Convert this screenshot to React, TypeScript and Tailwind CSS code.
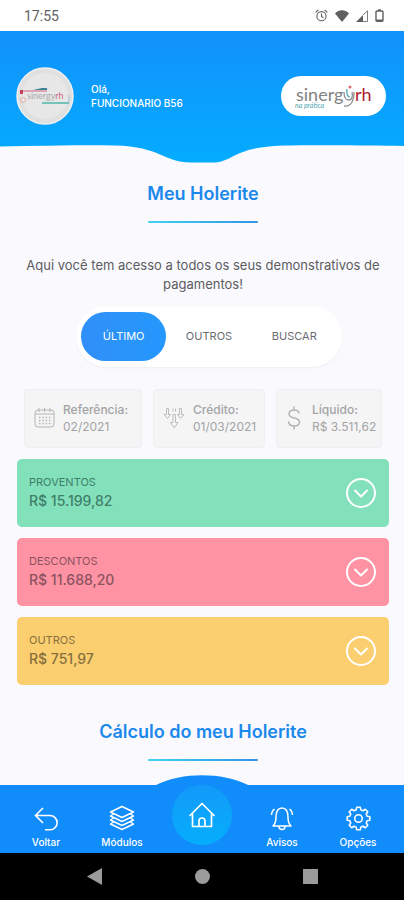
import { useState } from "react";

const tabs = ["ÚLTIMO", "OUTROS", "BUSCAR"];

const totals = [
  { label: "PROVENTOS", value: "R$ 15.199,82", color: "bg-[#82e0bb] text-[#3f7f69]" },
  { label: "DESCONTOS", value: "R$ 11.688,20", color: "bg-[#ff92a3] text-[#8a5260]" },
  { label: "OUTROS", value: "R$ 751,97", color: "bg-[#fbce70] text-[#86703e]" },
];

// outline of an 8 tooth gear around 12,12
const gearPoints = Array.from({ length: 8 })
  .flatMap((_, i) =>
    [
      [-15, 8.6],
      [-9, 11],
      [9, 11],
      [15, 8.6],
    ].map(([offset, radius]) => {
      const angle = ((i * 45 + offset) * Math.PI) / 180;
      return `${12 + radius * Math.cos(angle)},${12 + radius * Math.sin(angle)}`;
    })
  )
  .join(" ");

function CalendarIcon() {
  return (
    <svg width="21" height="22" viewBox="0 0 21 22" fill="none" stroke="#b4b4b4">
      <rect x="1" y="3" width="19" height="17" rx="3" />
      <path d="M1 7h19M5 1v4M10.500 1v4M16 1v4" />
      <path d="M5 10.500h12M5 13.500h12M5 16.500h12" strokeWidth="1.500" strokeDasharray="1.500 1.800" />
    </svg>
  );
}

function ArrowsIcon() {
  return (
    <svg width="22" height="22" viewBox="0 0 22 22" fill="none" stroke="#bcbcbc" strokeLinejoin="round">
      <path d="M3.500 1.500h2v6h2l-3 4-3.500-4h2.500zM16.500 1.500h2v6H21l-3.500 4-3-4h2z" />
      <path d="M10 7.500h2.500v8h2.500L11.300 21 7.500 15.500H10zM10 1.500v3M12.500 1.500v3" />
    </svg>
  );
}

function DollarIcon() {
  return (
    <svg width="18" height="24" viewBox="-1 0 18 24" fill="none" stroke="#b4b4b4" strokeWidth="1.500" strokeLinecap="round">
      <path d="M12 7c-.5-2-2.500-3-5-3-2.800 0-5 1.500-5 4 0 5.500 10.500 2.500 10.500 8 0 2.500-2.300 4-5.300 4C4 20 2 18.500 1.500 16M7 1v3M7 20v3" />
    </svg>
  );
}

const infos = [
  { label: "Referência:", value: "02/2021", icon: <CalendarIcon /> },
  { label: "Crédito:", value: "01/03/2021", icon: <ArrowsIcon /> },
  { label: "Líquido:", value: "R$ 3.511,62", icon: <DollarIcon /> },
];

function StatusBar() {
  return (
    <div className="flex h-[31px] items-center justify-between bg-white pr-5 pl-6 text-[#5f6062]">
      <span className="font-['Roboto',sans-serif] text-sm">17:55</span>
      <div className="flex items-center gap-[7px]">
        <svg width="13" height="13" viewBox="0 0 13 13" fill="none" stroke="currentColor" strokeWidth="1.100">
          <circle cx="6.500" cy="7.200" r="4.600" />
          <path d="M6.500 4.500v3l2 1.200M.6 3.300 3.300 1M12.400 3.300 9.700 1" />
        </svg>
        <svg width="14" height="12" viewBox="0 0 14 12" fill="currentColor">
          <path d="M0 3.500C4-.7 10-.7 14 3.500L7 12z" />
        </svg>
        <svg width="12" height="12" viewBox="0 0 12 12">
          <path d="M0 12 7 5v7z" fill="currentColor" />
          <path d="M7 5l4.500-4.200v10.700H7" fill="none" stroke="currentColor" strokeWidth=".8" />
        </svg>
        <svg width="9" height="13" viewBox="0 0 9 13" fill="none" stroke="currentColor" strokeWidth="1.400">
          <rect x="1" y="2" width="7" height="10.300" rx="1" />
          <path d="M3 1h3M1 11.300h7" />
        </svg>
      </div>
    </div>
  );
}

function Avatar() {
  return (
    <svg width="58" height="58" viewBox="0 0 58 58" aria-label="sinergyrh">
      <circle cx="29" cy="29" r="28" fill="#e0e0e0" stroke="#efefef" strokeWidth="1.500" />
      <circle cx="29" cy="29" r="23" fill="#e7e7e7" />
      <path d="M5 24h26" stroke="#d5637c" strokeWidth="1" />
      <path d="M17 23l9-2h5v2z" fill="#3b8294" />
      <path d="M4 23h3v4H4z" fill="#c43d5c" />
      <path d="M26 36h27" stroke="#4fb7a8" strokeWidth="1.500" />
      <path d="M53 28v8" stroke="#a5c7cf" />
      <circle cx="7" cy="33" r="2.500" fill="none" stroke="#dfb4a6" />
      <text x="11" y="32" fontSize="9" fill="#a9a9a9" fontFamily="Lato, sans-serif">
        sinergy<tspan fill="#d0697c">rh</tspan>
      </text>
    </svg>
  );
}

function Logo() {
  return (
    <div className="flex h-10 w-[105px] items-center justify-center rounded-full bg-white">
      <svg width="80" height="36" viewBox="0 0 80 36" aria-label="sinergyrh na prática">
        <text x="2" y="23" fontSize="18" fill="#838383" fontFamily="Lato, sans-serif">sinerg</text>
        <path d="M50 14c0 5 2 8 5 8s4-4 3-8M60 14c0 9-3 15-10 14" fill="none" stroke="#929292" strokeWidth="1.300" />
        <path d="M53 11c-1 5 1 8 3 8" fill="none" stroke="#65b5bd" strokeWidth="1.500" />
        <circle cx="56" cy="9" r="1.500" fill="#d96d72" />
        <text x="61" y="23" fontSize="18" fill="#b01c32" fontFamily="Lato, sans-serif">rh</text>
        <text x="1" y="30" fontSize="7" fontStyle="italic" fill="#4fa7b1" fontFamily="Lato, sans-serif">na prática</text>
      </svg>
    </div>
  );
}

function Header() {
  return (
    <header className="bg-linear-to-b from-[#1291fb] to-[#04acff]">
      <div className="flex h-[114px] items-center justify-between pt-4 pr-[18px] pl-4">
        <div className="flex items-center gap-[17px]">
          <Avatar />
          <p className="text-[10px] leading-[14px] font-medium text-white">
            Olá,
            <br />
            FUNCIONARIO B56
          </p>
        </div>
        <Logo />
      </div>
      <svg className="block h-[19px] w-full" viewBox="0 0 404 19" preserveAspectRatio="none">
        <path d="M0 1.500C40 1 80 0 115 .5 160 1.500 165 17.500 190 17.500H216C234 16 236 .5 290 .5 340 0 370 .5 404 1V19H0z" fill="#faf9fe" />
      </svg>
    </header>
  );
}

function Title({ children }: { children: string }) {
  return (
    <div className="flex flex-col items-center gap-[13px]">
      <h2 className="text-lg font-semibold text-[#1a88ec]">{children}</h2>
      <div className="h-[2px] w-[110px] rounded-full bg-linear-to-r from-[#3fd3ee] to-[#3294e4]" />
    </div>
  );
}

function NavBar() {
  const item = "flex flex-1 flex-col items-center gap-1 text-[10px] leading-[14px] font-medium";
  return (
    <nav className="relative flex h-[68px] items-end bg-[#118cfb] px-2 pb-1 text-white">
      <svg className="absolute bottom-full left-1/2 -ml-[46px]" width="92" height="10" viewBox="0 0 92 10">
        <path d="M0 10C26-3 66-3 92 10z" fill="#118cfb" />
      </svg>
      <button className={item}>
        <svg width="24" height="24" viewBox="0 0 24 24" fill="none" stroke="currentColor" strokeWidth="1.600">
          <path d="M9 1 1.500 8.500 9 16M1.500 8.500H16a7 7 0 0 1 0 14.300h-5" />
        </svg>
        Voltar
      </button>
      <button className={item}>
        <svg width="26" height="26" viewBox="0 0 26 26" fill="none" stroke="currentColor" strokeWidth="1.500" strokeLinejoin="round">
          <path d="M13 1.500 24.500 7 13 12.500 1.500 7z" />
          <path d="m4.500 9-3 2L13 16.500 24.500 11l-3-2M4.500 13l-3 2L13 20.500 24.500 15l-3-2M4.500 17l-3 2L13 24.500 24.500 19l-3-2" />
        </svg>
        Módulos
      </button>
      <button aria-label="Início" className="mx-3 mb-1 flex size-[60px] items-center justify-center rounded-full bg-linear-to-b from-[#129af9] to-[#05aefc]">
        <svg width="26" height="26" viewBox="0 0 26 26" fill="none" stroke="currentColor" strokeWidth="1.700" strokeLinecap="round" strokeLinejoin="round">
          <path d="M1 13.500 13 1.500l12 12M3.500 12v12.500h19V12M10 24.500V19a3 3 0 0 1 6 0v5.500" />
        </svg>
      </button>
      <button className={item}>
        <svg width="24" height="25" viewBox="0 0 24 25" fill="none" stroke="currentColor" strokeWidth="1.500" strokeLinejoin="round">
          <path d="M3 20c2-2 3-4 3-8.500C6 5 8 2 12 2s6 3 6 9.500c0 4.500 1 6.500 3 8.500zM9 20.500c0 4 6 4 6 0M4.500 3C2.500 4.500 1.500 7 1.500 9M19.500 3c2 1.500 3 4 3 6" />
        </svg>
        Avisos
      </button>
      <button className={item}>
        <svg width="25" height="25" viewBox="0 0 24 24" fill="none" stroke="currentColor" strokeWidth="1.500" strokeLinejoin="round">
          <circle cx="12" cy="12" r="3.600" />
          <polygon points={gearPoints} />
        </svg>
        Opções
      </button>
    </nav>
  );
}

export default function App() {
  const [tab, setTab] = useState("ÚLTIMO");

  return (
    <div className="flex min-h-screen flex-col bg-[#faf9fe] font-['Inter',sans-serif]">
      <StatusBar />
      <Header />
      <main className="flex-1 pt-4 pr-[15px] pl-[17px]">
        <Title>Meu Holerite</Title>
        <p className="mt-[33px] text-center text-[13px] leading-[19px] text-[#5c5c60]">
          Aqui você tem acesso a todos os seus demonstrativos de pagamentos!
        </p>
        <div className="mt-3 flex justify-center pl-3">
          <div className="flex w-[266px] rounded-full bg-white px-[5px] py-[6px] shadow-xs">
            {tabs.map((name) => (
              <button
                key={name}
                onClick={() => setTab(name)}
                className={
                  tab === name
                    ? "h-[49px] flex-1 rounded-full bg-linear-to-r from-[#2f8ff8] to-[#2498fd] text-[11px] text-white"
                    : "h-[49px] flex-1 rounded-full text-[11px] text-[#6b6b6f]"
                }
              >
                {name}
              </button>
            ))}
          </div>
        </div>
        <div className="mt-[22px] grid grid-cols-[118fr_112fr_106fr] gap-[11px] px-[7px]">
          {infos.map((info) => (
            <div key={info.label} className="flex h-[59px] items-center gap-2 rounded-sm border border-[#efeff1] bg-[#f5f5f6] pb-[2px] pl-[9px]">
              {info.icon}
              <p className="text-xs leading-[17px] whitespace-nowrap text-[#a3a3a5]">
                <span className="font-medium">{info.label}</span>
                <br />
                {info.value}
              </p>
            </div>
          ))}
        </div>
        <div className="mt-[11px] flex flex-col gap-[11px]">
          {totals.map((total) => (
            <button key={total.label} className={"flex h-[68px] items-center justify-between rounded-[5px] px-3 text-left " + total.color}>
              <span className="flex flex-col pb-[3px]">
                <span className="text-[11px] leading-[18px]">{total.label}</span>
                <span className="text-sm leading-[19px] font-medium">{total.value}</span>
              </span>
              <svg width="32" height="32" viewBox="0 0 32 32" fill="none" stroke="#fff" strokeWidth="2" strokeLinecap="round" strokeLinejoin="round">
                <circle cx="16" cy="16" r="14" />
                <path d="m10 13.500 6 6 6-6" />
              </svg>
            </button>
          ))}
        </div>
        <div className="mt-[33px] pb-6">
          <Title>Cálculo do meu Holerite</Title>
        </div>
      </main>
      <NavBar />
      <div className="flex h-[47px] items-center justify-center gap-[93px] bg-black">
        <svg width="15" height="17" viewBox="0 0 15 17" fill="#9b9b9b">
          <path d="M15 0v17L0 8.500z" />
        </svg>
        <div className="size-[15px] rounded-full bg-[#9b9b9b]" />
        <div className="size-[15px] bg-[#9b9b9b]" />
      </div>
    </div>
  );
}
